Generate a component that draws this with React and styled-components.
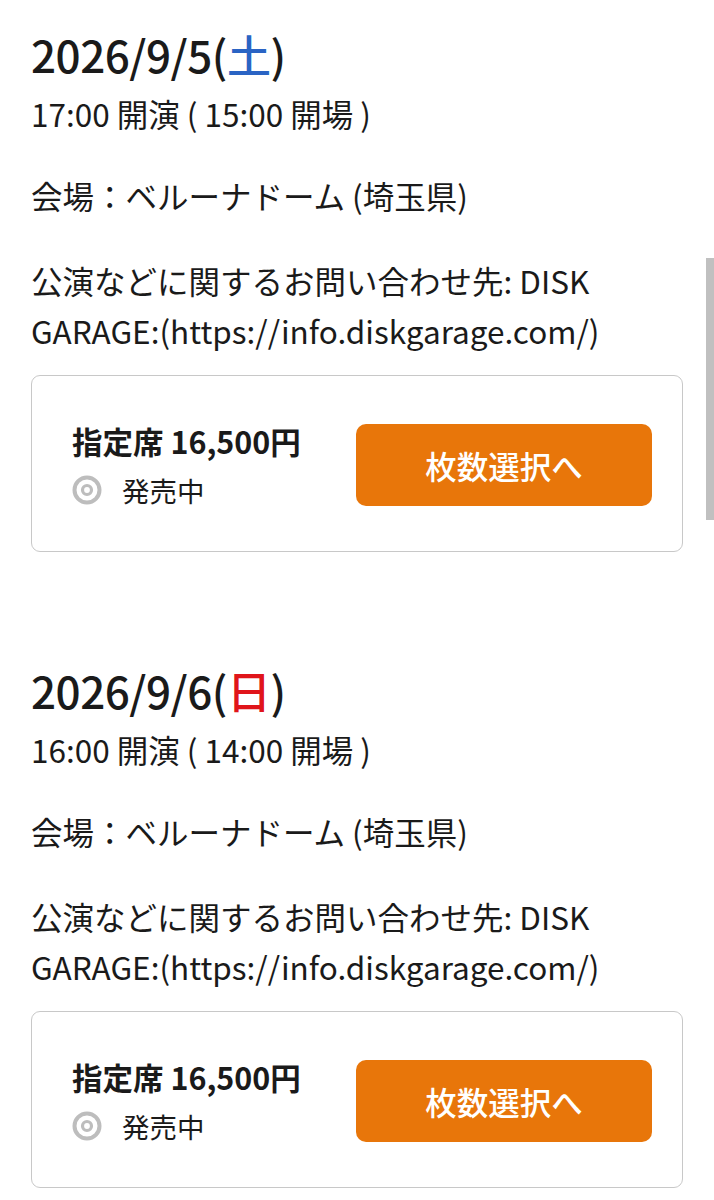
import React from "react";
import styled, { createGlobalStyle } from "styled-components";

const Global = createGlobalStyle`
  html, body { margin: 0; padding: 0; background: #fff; }
  body { font-family: "Noto Sans CJK JP", "Noto Sans", sans-serif; color: #1a1a1a; overflow: hidden; }
`;

const Page = styled.div`
  position: relative;
  width: 714px;
  height: 1200px;
  overflow: hidden;
  box-sizing: border-box;
  padding: 24px 31px 0 31px;
`;

const Section = styled.section`
  display: flex;
  flex-direction: column;
  margin-bottom: 108px;
`;

const DateTitle = styled.h2`
  margin: 0 0 4px;
  font-size: 44px;
  font-weight: 500;
  line-height: 60px;
  letter-spacing: -0.5px;
`;

const Wd = styled.span`
  color: ${(p) => p.$color};
`;

const Line = styled.p`
  margin: 0;
  font-size: 31.5px;
  line-height: 50px;
  font-weight: 400;
`;

const Spacer = styled.div`
  height: ${(p) => p.$h}px;
`;

const Card = styled.div`
  margin-top: 20px;
  border: 1.5px solid #c8c8c8;
  border-radius: 9px;
  height: 177px;
  box-sizing: border-box;
  display: flex;
  align-items: center;
  justify-content: space-between;
  padding: 0 30px 0 40px;
`;

const Info = styled.div`
  display: flex;
  flex-direction: column;
  gap: 9px;
  margin-top: 4px;
`;

const Price = styled.div`
  font-size: 30.5px;
  font-weight: 700;
  line-height: 40px;
`;

const Status = styled.div`
  display: flex;
  align-items: center;
  gap: 20px;
  font-size: 27.5px;
  line-height: 40px;
`;

const RingIcon = () => (
  <svg width="30" height="30" viewBox="0 0 30 30" fill="none" stroke="#bdbdbd">
    <circle cx="15" cy="15" r="12.5" strokeWidth="4" />
    <circle cx="15" cy="15" r="4.5" strokeWidth="3.2" />
  </svg>
);

const Button = styled.button`
  width: 296px;
  height: 82px;
  border: none;
  border-radius: 10px;
  background: #e8760a;
  color: #fff;
  font-family: inherit;
  font-size: 31.5px;
  font-weight: 500;
  margin-top: 2px;
`;

const Scrollbar = styled.div`
  position: absolute;
  right: 0;
  top: 258px;
  width: 8px;
  height: 262px;
  background: #c0c0c0;
`;

const shows = [
  { date: "2026/9/5", wd: "土", color: "#2a64c4", start: "17:00", open: "15:00" },
  { date: "2026/9/6", wd: "日", color: "#e0151a", start: "16:00", open: "14:00" },
];

export default function App() {
  return (
    <>
      <Global />
      <Page>
        {shows.map((s) => (
          <Section key={s.date}>
            <DateTitle>
              {s.date}(<Wd $color={s.color}>{s.wd}</Wd>)
            </DateTitle>
            <Line>{s.start} 開演 ( {s.open} 開場 )</Line>
            <Spacer $h={32} />
            <Line>会場：ベルーナドーム (埼玉県)</Line>
            <Spacer $h={35} />
            <Line>公演などに関するお問い合わせ先: DISK GARAGE:(https://info.diskgarage.com/)</Line>
            <Card>
              <Info>
                <Price>指定席 16,500円</Price>
                <Status>
                  <RingIcon />
                  発売中
                </Status>
              </Info>
              <Button>枚数選択へ</Button>
            </Card>
          </Section>
        ))}
        <Scrollbar />
      </Page>
    </>
  );
}
